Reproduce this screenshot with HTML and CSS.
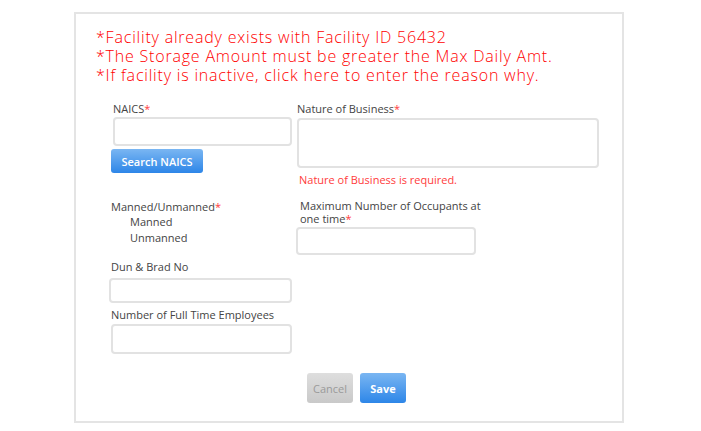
FILE: index.html
```html
<!DOCTYPE html>
<html>
<head>
<meta charset="utf-8">
<link rel="stylesheet" href="styles.css">
</head>
<body>
<div class="card">
  <div class="messages">
    <div>*Facility already exists with Facility ID 56432</div>
    <div>*The Storage Amount must be greater the Max Daily Amt.</div>
    <div>*If facility is inactive, click here to enter the reason why.</div>
  </div>
  <div class="form">
    <div class="col left">
      <label class="lbl naics-lbl">NAICS<span class="req">*</span></label>
      <div class="input naics-input"></div>
      <button class="btn btn-blue search-btn">Search NAICS</button>
      <label class="lbl manned-lbl">Manned/Unmanned<span class="req">*</span></label>
      <div class="option">Manned</div>
      <div class="option">Unmanned</div>
      <label class="lbl dun-lbl">Dun &amp; Brad No</label>
      <div class="input dun-input"></div>
      <label class="lbl emp-lbl">Number of Full Time Employees</label>
      <div class="input emp-input"></div>
    </div>
    <div class="col right">
      <label class="lbl nature-lbl">Nature of Business<span class="req">*</span></label>
      <div class="input textarea"></div>
      <div class="error">Nature of Business is required.</div>
      <label class="lbl occ-lbl">Maximum Number of Occupants at<br>one time<span class="req">*</span></label>
      <div class="input occ-input"></div>
    </div>
  </div>
  <div class="actions">
    <button class="btn btn-gray">Cancel</button>
    <button class="btn btn-blue save-btn">Save</button>
  </div>
</div>
</body>
</html>
```

FILE: styles.css
```css
html, body {
  margin: 0;
  padding: 0;
  background: #ffffff;
}
body {
  font-family: "Open Sans", "Liberation Sans", sans-serif;
  color: #444444;
}
.card {
  box-sizing: border-box;
  margin: 12px 0 0 74px;
  width: 550px;
  height: 411px;
  border: 2px solid #e4e4e4;
  background: #ffffff;
}
.messages {
  padding: 14px 0 0 20px;
  font-size: 16px;
  font-weight: 300;
  letter-spacing: 0.8px;
  line-height: 19px;
  color: #ff0000;
}
.form {
  display: flex;
  margin-top: 17px;
}
.col {
  display: flex;
  flex-direction: column;
  align-items: flex-start;
}
.left {
  width: 183px;
  margin-left: 33px;
}
.right {
  margin-left: 4px;
}
.lbl {
  display: block;
  font-size: 11px;
  line-height: 14px;
  color: #444444;
}
.req {
  color: #ff3b3b;
}
.input {
  box-sizing: border-box;
  border: 2px solid #e2e2e2;
  border-radius: 4px;
  background: #ffffff;
}
.naics-lbl {
  margin-left: 4px;
}
.naics-input {
  margin: 1px 0 0 4px;
  width: 179px;
  height: 29px;
}
.btn {
  font-family: "Open Sans", "Liberation Sans", sans-serif;
  border: none;
  border-radius: 3px;
  padding: 0;
  cursor: pointer;
}
.btn-blue {
  background: linear-gradient(#7ab6f2, #2d86e8);
  color: #ffffff;
}
.btn-gray {
  background: linear-gradient(#dedede, #c9c9c9);
  color: #9a9a9a;
}
.search-btn {
  margin: 3px 0 0 2px;
  width: 92px;
  height: 24px;
  font-size: 11px;
  font-weight: 600;
}
.manned-lbl {
  margin: 26px 0 0 2px;
  line-height: 15px;
}
.option {
  font-size: 11px;
  line-height: 16px;
  margin-left: 21px;
}
.dun-lbl {
  margin: 14px 0 0 2px;
}
.dun-input {
  margin-top: 4px;
  width: 183px;
  height: 25px;
}
.emp-lbl {
  margin: 5px 0 0 2px;
}
.emp-input {
  margin: 2px 0 0 2px;
  width: 181px;
  height: 30px;
}
.nature-lbl {
  margin-left: 1px;
}
.textarea {
  margin: 2px 0 0 1px;
  width: 302px;
  height: 50px;
}
.error {
  margin: 5px 0 0 3px;
  font-size: 11px;
  line-height: 14px;
  color: #ff3b3b;
}
.occ-lbl {
  margin: 12px 0 0 4px;
  line-height: 13px;
}
.occ-input {
  margin-top: 2px;
  width: 180px;
  height: 28px;
}
.actions {
  display: flex;
  gap: 7px;
  margin: 19px 0 0 231px;
}
.actions .btn {
  width: 46px;
  height: 30px;
  font-size: 11px;
}
.save-btn {
  font-weight: 700;
}
```
